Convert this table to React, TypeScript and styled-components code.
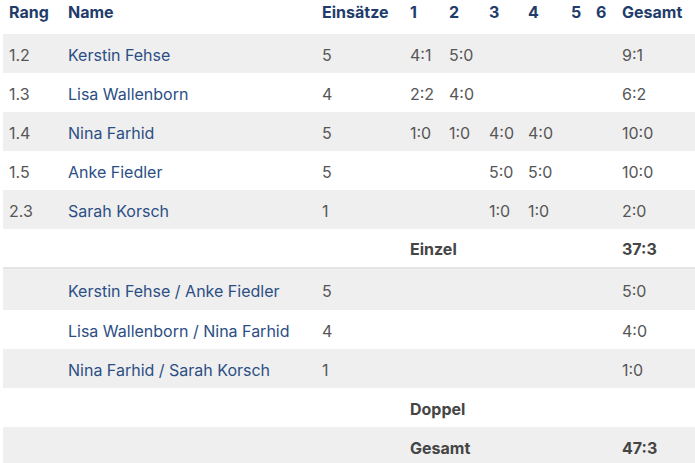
import React from 'react';
import styled, { createGlobalStyle } from 'styled-components';

const GlobalStyle = createGlobalStyle`
  body {
    margin: 0;
    background: #ffffff;
    font-family: Inter, "Noto Sans", "Liberation Sans", sans-serif;
  }
`;

const navy = '#1f3c6b';
const blue = '#2b4e84';
const grey = '#565656';
const stripe = '#efefef';

const Wrapper = styled.div`
  padding-left: 3px;
  overflow: hidden;
`;

const Table = styled.table`
  width: 700px;
  border-collapse: collapse;
  table-layout: fixed;
  font-size: 16px;
`;

const HeadRow = styled.tr`
  height: 34px;
`;

const HeadCell = styled.th`
  text-align: left;
  font-weight: 700;
  color: ${navy};
  padding: 0 6px;
  line-height: 24px;
  vertical-align: top;
  white-space: nowrap;
`;

const Body = styled.tbody<{ $split?: boolean }>`
  border-top: ${(p) => (p.$split ? '2px solid #e4e4e4' : 'none')};
`;

const Row = styled.tr<{ $striped?: boolean; $tall?: boolean }>`
  height: ${(p) => (p.$tall ? '42px' : '39px')};
  background: ${(p) => (p.$striped ? stripe : 'transparent')};
`;

const Cell = styled.td<{ $tone?: 'name' | 'total' }>`
  padding: 2px 6px 0;
  vertical-align: middle;
  white-space: nowrap;
  color: ${(p) => (p.$tone === 'name' ? blue : p.$tone === 'total' ? '#454545' : grey)};
  font-weight: ${(p) => (p.$tone === 'total' ? 700 : 400)};
`;

type Player = { rang: string; name: string; count: number; sets: string[]; total: string };

const singles: Player[] = [
  { rang: '1.2', name: 'Kerstin Fehse', count: 5, sets: ['4:1', '5:0', '', '', '', ''], total: '9:1' },
  { rang: '1.3', name: 'Lisa Wallenborn', count: 4, sets: ['2:2', '4:0', '', '', '', ''], total: '6:2' },
  { rang: '1.4', name: 'Nina Farhid', count: 5, sets: ['1:0', '1:0', '4:0', '4:0', '', ''], total: '10:0' },
  { rang: '1.5', name: 'Anke Fiedler', count: 5, sets: ['', '', '5:0', '5:0', '', ''], total: '10:0' },
  { rang: '2.3', name: 'Sarah Korsch', count: 1, sets: ['', '', '1:0', '1:0', '', ''], total: '2:0' },
];

const doubles: Player[] = [
  { rang: '', name: 'Kerstin Fehse / Anke Fiedler', count: 5, sets: ['', '', '', '', '', ''], total: '5:0' },
  { rang: '', name: 'Lisa Wallenborn / Nina Farhid', count: 4, sets: ['', '', '', '', '', ''], total: '4:0' },
  { rang: '', name: 'Nina Farhid / Sarah Korsch', count: 1, sets: ['', '', '', '', '', ''], total: '1:0' },
];

const widths = [59, 254, 88, 39, 40, 39, 43, 25, 26, 87];

function PlayerRow({ p, striped, tall }: { p: Player; striped: boolean; tall?: boolean }) {
  return (
    <Row $striped={striped} $tall={tall}>
      <Cell>{p.rang}</Cell>
      <Cell $tone="name">{p.name}</Cell>
      <Cell>{p.count}</Cell>
      {p.sets.map((s, i) => (
        <Cell key={i}>{s}</Cell>
      ))}
      <Cell>{p.total}</Cell>
    </Row>
  );
}

function SumRow({ label, total, striped }: { label: string; total: string; striped: boolean }) {
  return (
    <Row $striped={striped}>
      <Cell colSpan={3} />
      <Cell $tone="total" colSpan={6}>
        {label}
      </Cell>
      <Cell $tone="total">{total}</Cell>
    </Row>
  );
}

export default function App() {
  return (
    <Wrapper>
      <GlobalStyle />
      <Table>
        <colgroup>
          {widths.map((w, i) => (
            <col key={i} style={{ width: w }} />
          ))}
        </colgroup>
        <thead>
          <HeadRow>
            <HeadCell>Rang</HeadCell>
            <HeadCell>Name</HeadCell>
            <HeadCell>Einsätze</HeadCell>
            <HeadCell>1</HeadCell>
            <HeadCell>2</HeadCell>
            <HeadCell>3</HeadCell>
            <HeadCell>4</HeadCell>
            <HeadCell>5</HeadCell>
            <HeadCell>6</HeadCell>
            <HeadCell>Gesamt</HeadCell>
          </HeadRow>
        </thead>
        <Body>
          {singles.map((p, i) => (
            <PlayerRow key={p.name} p={p} striped={i % 2 === 0} />
          ))}
          <SumRow label="Einzel" total="37:3" striped={false} />
        </Body>
        <Body $split>
          {doubles.map((p, i) => (
            <PlayerRow key={p.name} p={p} striped={i % 2 === 0} tall={i === 0} />
          ))}
          <SumRow label="Doppel" total="" striped={false} />
          <SumRow label="Gesamt" total="47:3" striped />
        </Body>
      </Table>
    </Wrapper>
  );
}
